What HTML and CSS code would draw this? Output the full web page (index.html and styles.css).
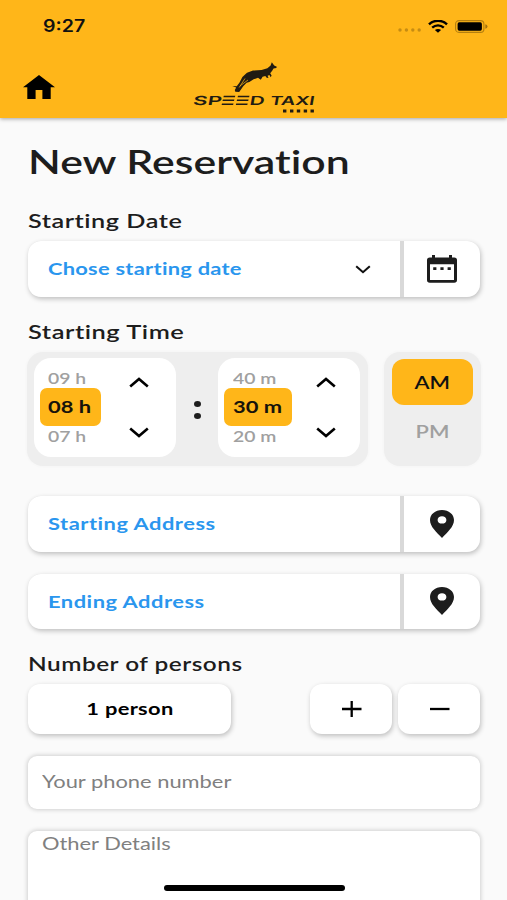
FILE: index.html
```html
<!DOCTYPE html>
<html lang="en">
<head>
<meta charset="utf-8">
<title>Speed Taxi</title>
<link rel="stylesheet" href="styles.css">
</head>
<body>
<div class="screen">
  <header class="header">
    <div class="status">
      <span class="clock t">9:27</span>
      <div class="indicators">
        <svg class="signal" width="24" height="4" viewBox="0 0 24 4"><g fill="#c68c12"><circle cx="2" cy="2" r="1.7"/><circle cx="8.4" cy="2" r="1.7"/><circle cx="14.8" cy="2" r="1.7"/><circle cx="21.2" cy="2" r="1.7"/></g></svg>
        <svg class="wifi" width="20" height="13" viewBox="0 0 20 13"><path d="M1 4.3C6-.3 14-.3 19 4.3" fill="none" stroke="#000" stroke-width="2.5"/><path d="M4.2 7.6c3.4-3 8.2-3 11.6 0" fill="none" stroke="#000" stroke-width="2.4"/><path d="M6.9 10.1c1.8-1.5 4.4-1.5 6.2 0L10 12.8z"/></svg>
        <svg class="battery" width="33" height="13" viewBox="0 0 33 13"><rect x=".6" y=".6" width="28.3" height="11.8" rx="3.4" fill="none" stroke="#b47f10" stroke-width="1.1"/><rect x="2.6" y="2.3" width="24.3" height="8.4" rx="1.6"/><path d="M30.3 4.2q2.2.5 2.2 2.3t-2.2 2.3z" fill="#a37310"/></svg>
      </div>
    </div>
    <div class="brandbar">
      <svg class="home" width="32" height="24" viewBox="0 0 32 24"><path d="M16 0 32 12.2h-4.3V24h-8.3v-9h-6.8v9H4.3V12.2H0z"/></svg>
      <svg class="logo" width="124" height="52" viewBox="192 62 124 52">
        <g fill="#211b12">
          <path d="M271.8 62.3 274.2 65.4 276.8 66.7 276.3 68 273.5 68.4 272.2 70.7 270.2 73.3 271.6 75.4 270.7 77.2 269.4 74.9 267.6 75.8 268.5 78 266.7 77.8 265.3 76.1 262.6 76.8 260.8 79.7 258 77.7 253.6 79.3 249.4 82 246.6 82.8 243.2 86.2 240.8 89.8 239.2 91.9 235.3 91.7 234.8 90 236.2 87.4 232.3 86 236.7 86.2 239.4 82.8 242.4 77 247 72.7 253 70.6 261.6 70 267.4 68.2 270.6 65.4z"/>
          <path d="m245 78.5-5.8 9M248 80l-8.2 6.1" fill="none" stroke="#ffb619" stroke-width=".7"/>
          <path d="M223.8 95.8h11.5l-.4 1.500h-11.5zM222.900 99.600h11.5l-.4 1.500h-11.5zM222 103.400h11.5l-.4 1.500h-11.5zM238 95.8h11.5l-.4 1.500h-11.5zM237.100 99.600h11.5l-.4 1.500h-11.5zM236.200 103.400h11.5l-.4 1.500h-11.5z"/>
          <g class="wordmark" transform="translate(0 105) skewX(-10)">
            <text x="192.600" y="0" textLength="28.500" lengthAdjust="spacingAndGlyphs">SP</text>
            <text x="249" y="0" textLength="15" lengthAdjust="spacingAndGlyphs">D</text>
            <text x="269.500" y="0" textLength="44.500" lengthAdjust="spacingAndGlyphs">TAXI</text>
          </g>
          <path d="M283 109.5h3.4v3h-3.4zM290 109.5h3.4v3H290zM296.8 109.5h3.4v3h-3.4zM303.7 109.5h3.4v3h-3.4zM310.5 109.5h3.4v3h-3.4z"/>
        </g>
      </svg>
    </div>
  </header>

  <main class="form">
    <h1 class="title"><span class="t">New Reservation</span></h1>

    <h2 class="label label-date"><span class="t">Starting Date</span></h2>
    <div class="split">
      <div class="split-main">
        <span class="t">Chose starting date</span>
        <svg class="chevron" width="16" height="9" viewBox="0 0 16 9"><path d="M1.2 1.2 8 7.2l6.8-6" fill="none" stroke="#111" stroke-width="2.1"/></svg>
      </div>
      <div class="split-side">
        <svg width="30" height="28" viewBox="0 0 30 28"><path d="M5 0h3v2.500h14V0h3v2.500h2.200Q30 2.500 30 5v20Q30 27.700 27.200 27.700H2.800Q0 27.700 0 25V5Q0 2.500 2.800 2.500H5zM3 9.300V25H27V9.300zM6.200 12.200h3.200v2.800h-3.200zM13.400 12.200h3.200v2.800h-3.200zM20.600 12.200h3.200v2.800h-3.200z" fill="#1d1d1d" fill-rule="evenodd"/></svg>
      </div>
    </div>

    <h2 class="label label-time"><span class="t">Starting Time</span></h2>
    <div class="time">
      <div class="time-panel">
        <div class="wheel">
          <div class="values hours">
            <span class="dim"><span class="t">09 h</span></span>
            <span class="current"><span class="t">08 h</span></span>
            <span class="dim"><span class="t">07 h</span></span>
          </div>
          <div class="arrows">
            <svg width="20" height="11" viewBox="0 0 20 11"><path d="M1.200 9.500 10 2l8.800 7.500" fill="none" stroke="#000" stroke-width="2.600"/></svg>
            <svg width="20" height="11" viewBox="0 0 20 11"><path d="M1.200 1.500 10 9l8.800-7.500" fill="none" stroke="#000" stroke-width="2.600"/></svg>
          </div>
        </div>
        <div class="colon"><i></i><i></i></div>
        <div class="wheel">
          <div class="values minutes">
            <span class="dim"><span class="t">40 m</span></span>
            <span class="current"><span class="t">30 m</span></span>
            <span class="dim"><span class="t">20 m</span></span>
          </div>
          <div class="arrows">
            <svg width="20" height="11" viewBox="0 0 20 11"><path d="M1.200 9.500 10 2l8.800 7.500" fill="none" stroke="#000" stroke-width="2.600"/></svg>
            <svg width="20" height="11" viewBox="0 0 20 11"><path d="M1.200 1.500 10 9l8.800-7.500" fill="none" stroke="#000" stroke-width="2.600"/></svg>
          </div>
        </div>
      </div>
      <div class="meridiem">
        <div class="half on"><span class="t">AM</span></div>
        <div class="half"><span class="t">PM</span></div>
      </div>
    </div>

    <div class="split address start">
      <div class="split-main"><span class="t">Starting Address</span></div>
      <div class="split-side">
        <svg width="24" height="28" viewBox="0 0 24 28"><path d="M12 0C5.200 0 0 4.400 0 10c0 6.700 6.600 12.300 12 18 5.400-5.700 12-11.300 12-18C24 4.400 18.800 0 12 0zm0 6.200c2.600 0 4.400 1.500 4.400 3.700s-1.800 3.700-4.400 3.700-4.400-1.500-4.400-3.700S9.400 6.200 12 6.200z" fill="#1d1d1d"/></svg>
      </div>
    </div>
    <div class="split address end">
      <div class="split-main"><span class="t">Ending Address</span></div>
      <div class="split-side">
        <svg width="24" height="28" viewBox="0 0 24 28"><path d="M12 0C5.200 0 0 4.400 0 10c0 6.700 6.600 12.300 12 18 5.400-5.700 12-11.300 12-18C24 4.400 18.800 0 12 0zm0 6.200c2.600 0 4.400 1.500 4.400 3.700s-1.800 3.700-4.400 3.700-4.400-1.500-4.400-3.700S9.400 6.200 12 6.200z" fill="#1d1d1d"/></svg>
      </div>
    </div>

    <h2 class="label label-persons"><span class="t">Number of persons</span></h2>
    <div class="persons">
      <div class="card count"><span class="t">1 person</span></div>
      <div class="steppers">
        <div class="card step"><svg width="20" height="16" viewBox="0 0 20 16"><path d="M0 8h19.500M9.700 0v16" fill="none" stroke="#000" stroke-width="2.300"/></svg></div>
        <div class="card step"><svg width="20" height="16" viewBox="0 0 20 16"><path d="M0 8h19.500" fill="none" stroke="#000" stroke-width="2.300"/></svg></div>
      </div>
    </div>

    <div class="input phone"><span class="t">Your phone number</span></div>
    <div class="input details"><span class="t">Other Details</span></div>
  </main>
  <div class="home-indicator"></div>
</div>
</body>
</html>
```
FILE: styles.css
```css
* { box-sizing: border-box; }
body {
  margin: 0;
  background: #fafafa;
  color: #1d1d1d;
  font-family: Lato, "Open Sans", sans-serif;
  font-weight: 600;
  font-variant-ligatures: none;
}
svg { display: block; flex: none; }
.screen {
  position: relative;
  width: 507px;
  height: 900px;
  overflow: hidden;
}
.t {
  display: inline-block;
  white-space: nowrap;
  transform: scaleX(1.25);
  transform-origin: left center;
}

/* Header */
.header {
  height: 118px;
  background: #ffb619;
  box-shadow: 0 1px 4px rgba(0, 0, 0, .35);
}
.status {
  display: flex;
  justify-content: space-between;
  height: 54px;
  padding: 16px 19px 0 43px;
}
.clock {
  color: #111;
  font: 600 17px/21px Inter, sans-serif;
  transform: scaleX(1.15);
}
.indicators { display: flex; align-items: flex-start; }
.signal { margin: 12px 6px 0 0; }
.wifi { margin: 4px 7px 0 0; }
.battery { margin-top: 4px; }
.brandbar { display: flex; padding-left: 23px; }
.home { margin-top: 21px; }
.logo { margin: 8px 0 0 137px; }
.wordmark {
  font: 600 12.5px Inter, "Liberation Sans", sans-serif;
}

/* Form */
.form { padding: 0 27px 0 28px; }
.title, .label { margin: 0; font-weight: 600; }
.title {
  height: 87px;
  padding-top: 22px;
  font-size: 33px;
  line-height: 42px;
}
.title .t { transform: scaleX(1.296); }
.label {
  height: 36px;
  padding-top: 4px;
  font-size: 19.500px;
  line-height: 24px;
  letter-spacing: .4px;
}
.label-date .t { transform: scaleX(1.295); }
.label-time .t { transform: scaleX(1.305); }
.split {
  display: flex;
  gap: 4px;
  height: 56px;
  border-radius: 13px;
  overflow: hidden;
  background: #d9d9d9;
  box-shadow: 1px 2px 5px rgba(0, 0, 0, .24);
}
.split-main, .split-side {
  display: flex;
  align-items: center;
  background: #fff;
}
.split-main {
  flex: 1;
  justify-content: space-between;
  padding: 0 29px 2px 20px;
  color: #2a96ee;
  font-size: 17.500px;
  font-weight: 700;
  letter-spacing: .2px;
}
.address .split-main { padding-bottom: 0; letter-spacing: .4px; }
.chevron { margin-top: 2px; }
.split-side { justify-content: center; width: 76px; }
.label-time { height: 55px; padding-top: 23px; }

/* Time */
.time {
  display: flex;
  gap: 15px;
  height: 114px;
  margin: 0 -1px 0 -1px;
}
.time-panel, .meridiem {
  background: #eee;
  border-radius: 16px;
  box-shadow: 0 0 3px #f1f1f1;
}
.time-panel {
  display: flex;
  width: 343px;
  padding: 6px 8px 9px 7px;
}
.wheel {
  display: flex;
  width: 142px;
  padding: 9px 0 0 6px;
  border-radius: 17px;
  background: #fff;
}
.values { width: 67px; }
.dim, .current {
  display: flex;
  align-items: center;
  padding-left: 8px;
}
.dim { height: 21px; color: #a0a0a0; font-size: 15.500px; }
.current {
  width: 61px;
  height: 38px;
  padding-bottom: 1px;
  border-radius: 7px;
  background: #ffb619;
  color: #17130b;
  font-size: 17.500px;
  font-weight: 700;
}
.current + .dim { height: 19px; }
.minutes .dim, .minutes .current { padding-left: 9px; }
.minutes .current { width: 68px; }
.arrows {
  display: flex;
  flex-direction: column;
  gap: 39px;
  margin: 10px 0 0 22px;
}
.minutes + .arrows { margin-left: 25px; }
.colon {
  display: flex;
  flex-direction: column;
  align-items: center;
  gap: 6px;
  width: 42px;
  padding-top: 43px;
}
.colon i { width: 7px; height: 6px; border-radius: 50%; background: #1d1d1d; }
.meridiem { width: 97px; margin-left: 1px; padding: 7px 8px; }
.half {
  display: flex;
  align-items: center;
  justify-content: center;
  width: 81px;
  height: 46px;
  border-radius: 12px;
  color: #a0a0a0;
  font-size: 17.500px;
}
.half .t { transform-origin: center; }
.half.on { background: #ffb619; color: #111; }
.half + .half { height: 52px; }

/* Addresses and persons */
.address { height: 55.500px; }
.start { margin-top: 30px; }
.end { margin-top: 22px; }
.label-persons { height: 55px; padding-top: 23px; }
.persons {
  display: flex;
  justify-content: space-between;
}
.card {
  display: flex;
  align-items: center;
  justify-content: center;
  height: 50px;
  border-radius: 12px;
  background: #fff;
  box-shadow: 1px 2px 5px rgba(0, 0, 0, .24);
}
.count {
  width: 203px;
  padding-bottom: 1px;
  color: #000;
  font-size: 17.500px;
  font-weight: 700;
  letter-spacing: .25px;
}
.count .t { transform-origin: center; }
.steppers { display: flex; gap: 6px; }
.step { width: 82px; }
.step svg { margin-left: 1px; }
.input {
  border-radius: 9px;
  background: #fff;
  box-shadow: 0 0 4px 1px rgba(0, 0, 0, .17);
  color: #808080;
  font-size: 17.500px;
  font-weight: 400;
  padding-left: 14px;
}
.phone { height: 53px; margin-top: 22px; line-height: 52px; }
.details { height: 90px; margin-top: 22px; line-height: 25px; }

.home-indicator {
  position: absolute;
  left: 164px;
  bottom: 9px;
  width: 181px;
  height: 6px;
  border-radius: 3px;
  background: #000;
}
```
